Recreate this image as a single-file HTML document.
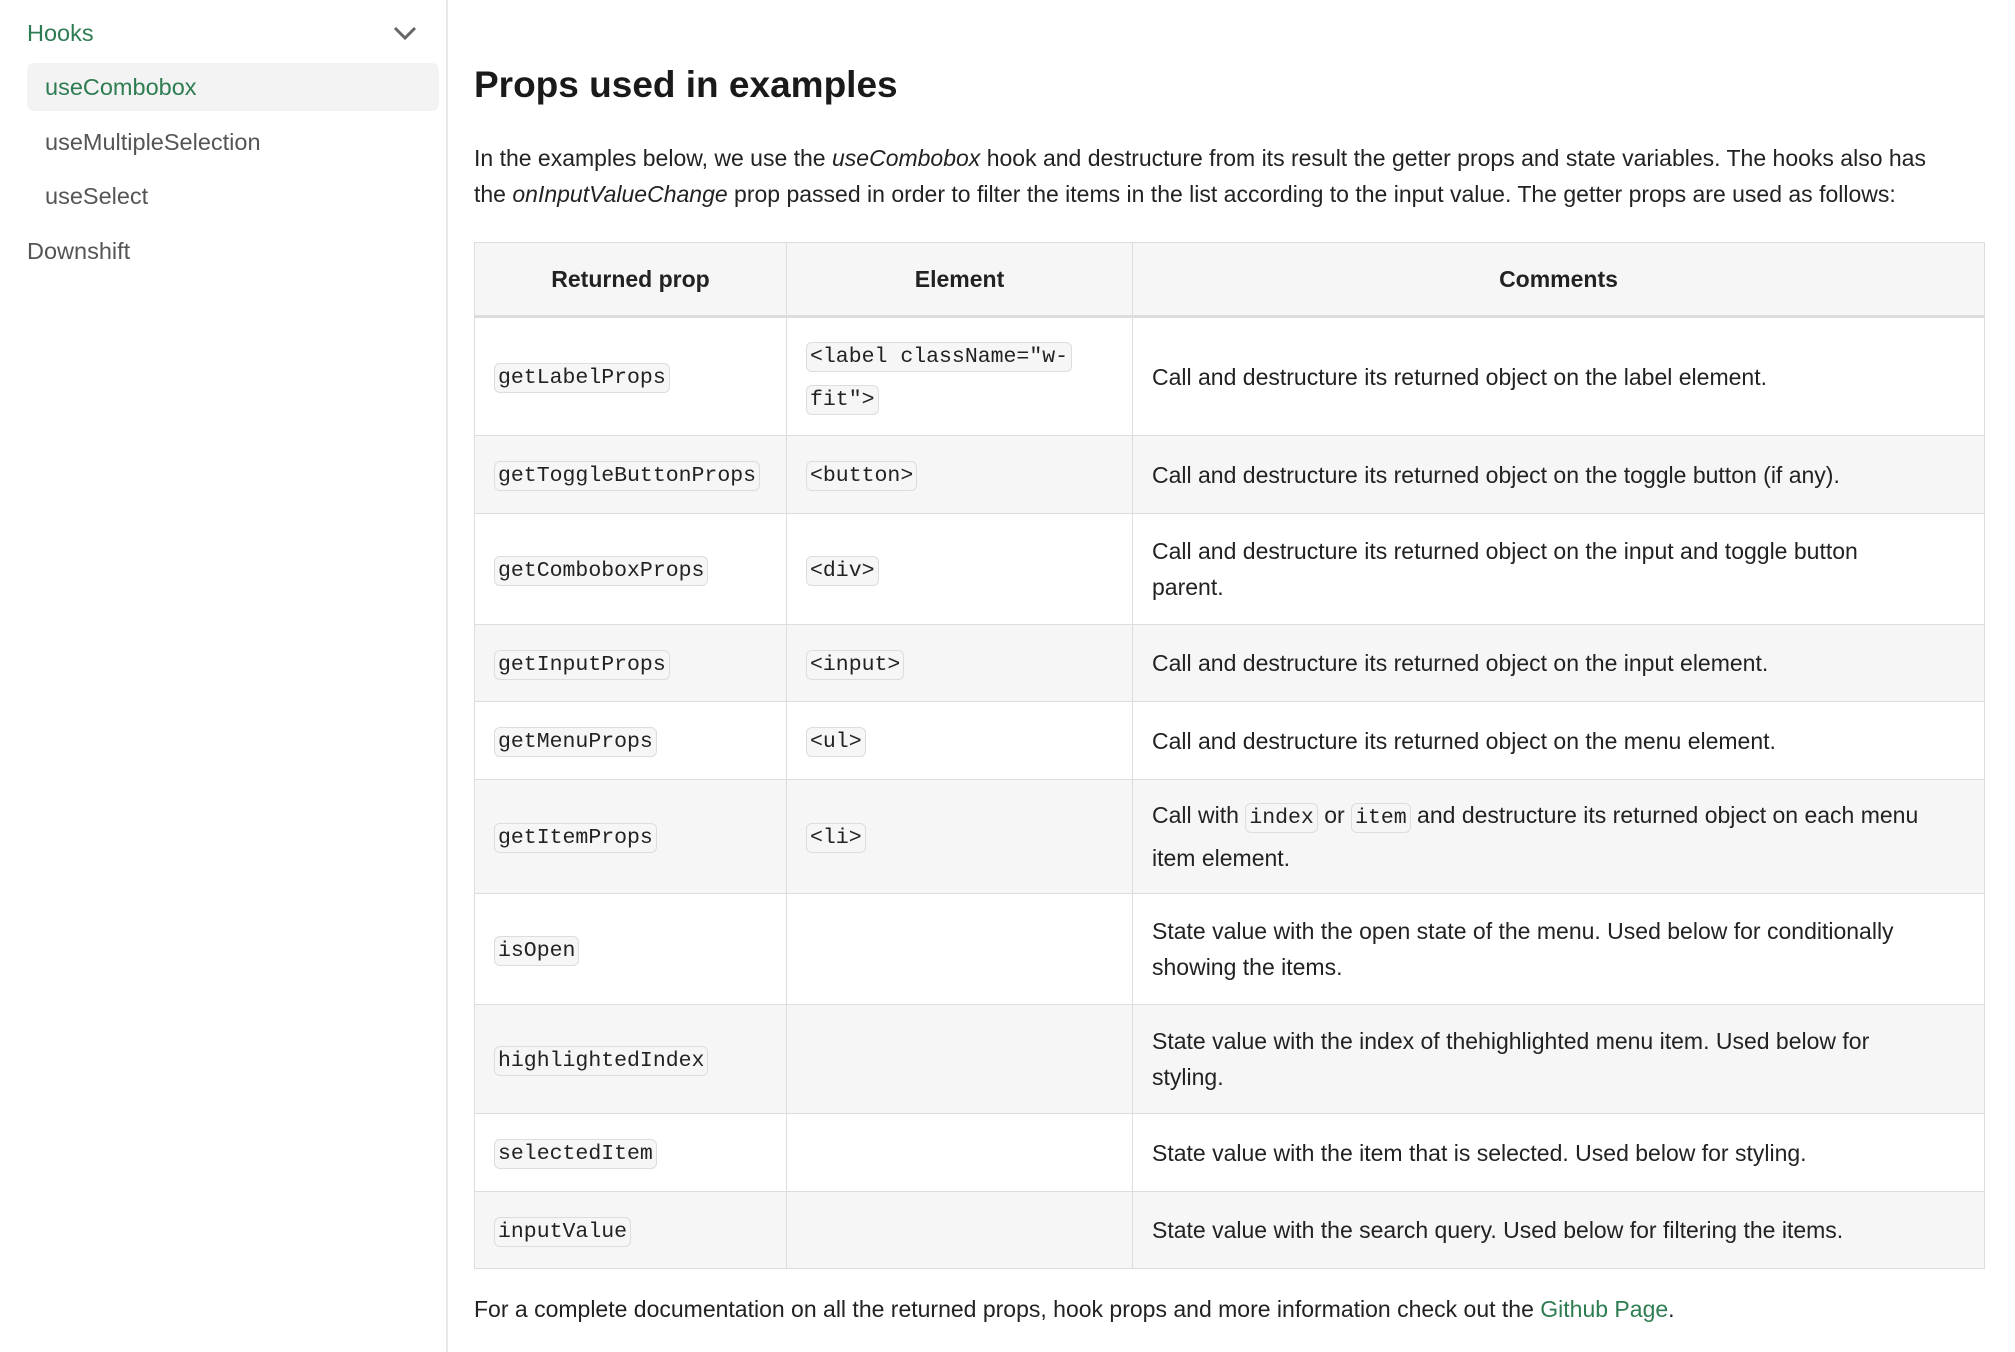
<!DOCTYPE html>
<html><head><meta charset="utf-8"><style>
*{box-sizing:border-box;margin:0;padding:0}
body{width:2015px;height:1352px;background:#fff;font-family:"Liberation Sans",sans-serif;color:#222;position:relative;overflow:hidden;font-size:23px}
.side{position:absolute;left:0;top:0;width:448px;height:1352px;border-right:2px solid #e8e8e8}
.side div{position:absolute;font-size:23.5px;color:#555}
.hooks{left:27px;top:20px;color:#2e7d52!important}
.active{left:27px;top:63px;width:412px;height:48px;background:#f3f3f3;border-radius:7px;padding:11px 0 0 18px;color:#2e7d52!important}
h1{position:absolute;left:474px;top:64px;font-size:37px;font-weight:bold;color:#1a1a1a}
p.intro{position:absolute;left:474px;top:140px;width:1530px;line-height:36px;font-size:23px}
table{position:absolute;left:474px;top:242px;width:1511px;border-collapse:collapse;font-size:23px}
td,th{border:1.5px solid #ddd;padding:0 19px;line-height:36px;vertical-align:middle;text-align:left}
th{background:#f6f6f6;height:74px;text-align:center;border-bottom:3px solid #ddd;font-weight:bold}
tr.s td{background:#f6f6f6}
code{font-family:"Liberation Mono",monospace;font-size:21.5px;background:#f6f6f6;border:1.5px solid #ddd;border-radius:6px;padding:2px 3px}
.foot{position:absolute;left:474px;top:1296px;font-size:23px}
a{color:#2e7d52;text-decoration:none}
</style></head><body>
<div class="side">
<div class="hooks">Hooks</div>
<svg style="position:absolute;left:392px;top:24px" width="26" height="18" viewBox="0 0 26 18"><path d="M3 4 L13 14 L23 4" fill="none" stroke="#666" stroke-width="3"/></svg>
<div class="active">useCombobox</div>
<div style="left:45px;top:129px">useMultipleSelection</div>
<div style="left:45px;top:183px">useSelect</div>
<div style="left:27px;top:238px">Downshift</div>
</div>
<h1>Props used in examples</h1>
<p class="intro">In the examples below, we use the <i>useCombobox</i> hook and destructure from its result the getter props and state variables. The hooks also has<br>the <i>onInputValueChange</i> prop passed in order to filter the items in the list according to the input value. The getter props are used as follows:</p>
<table>
<colgroup><col style="width:312px"><col style="width:346px"><col></colgroup>
<tr><th>Returned prop</th><th>Element</th><th>Comments</th></tr>
<tr style="height:119px"><td><code>getLabelProps</code></td><td style="line-height:40px"><code>&lt;label className="w-</code><br><code>fit"&gt;</code></td><td>Call and destructure its returned object on the label element.</td></tr>
<tr class="s" style="height:78px"><td><code>getToggleButtonProps</code></td><td><code>&lt;button&gt;</code></td><td>Call and destructure its returned object on the toggle button (if any).</td></tr>
<tr style="height:111px"><td><code>getComboboxProps</code></td><td><code>&lt;div&gt;</code></td><td>Call and destructure its returned object on the input and toggle button<br>parent.</td></tr>
<tr class="s" style="height:77px"><td><code>getInputProps</code></td><td><code>&lt;input&gt;</code></td><td>Call and destructure its returned object on the input element.</td></tr>
<tr style="height:78px"><td><code>getMenuProps</code></td><td><code>&lt;ul&gt;</code></td><td>Call and destructure its returned object on the menu element.</td></tr>
<tr class="s" style="height:114px"><td><code>getItemProps</code></td><td><code>&lt;li&gt;</code></td><td style="line-height:40px">Call with <code>index</code> or <code>item</code> and destructure its returned object on each menu<br>item element.</td></tr>
<tr style="height:111px"><td><code>isOpen</code></td><td></td><td>State value with the open state of the menu. Used below for conditionally<br>showing the items.</td></tr>
<tr class="s" style="height:109px"><td><code>highlightedIndex</code></td><td></td><td>State value with the index of thehighlighted menu item. Used below for<br>styling.</td></tr>
<tr style="height:78px"><td><code>selectedItem</code></td><td></td><td>State value with the item that is selected. Used below for styling.</td></tr>
<tr class="s" style="height:77px"><td><code>inputValue</code></td><td></td><td>State value with the search query. Used below for filtering the items.</td></tr>
</table>
<div class="foot">For a complete documentation on all the returned props, hook props and more information check out the <a>Github Page</a>.</div>
</body></html>
